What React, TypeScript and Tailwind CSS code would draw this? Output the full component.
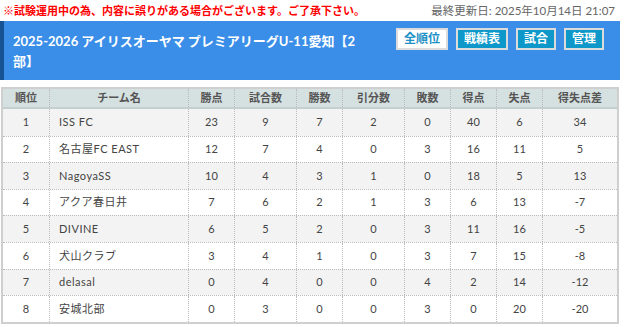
import React from "react";

const rows = [
  [1, "ISS FC", 23, 9, 7, 2, 0, 40, 6, "34"],
  [2, "名古屋FC EAST", 12, 7, 4, 0, 3, 16, 11, "5"],
  [3, "NagoyaSS", 10, 4, 3, 1, 0, 18, 5, "13"],
  [4, "アクア春日井", 7, 6, 2, 1, 3, 6, 13, "-7"],
  [5, "DIVINE", 6, 5, 2, 0, 3, 11, 16, "-5"],
  [6, "犬山クラブ", 3, 4, 1, 0, 3, 7, 15, "-8"],
  [7, "delasal", 0, 4, 0, 0, 4, 2, 14, "-12"],
  [8, "安城北部", 0, 3, 0, 0, 3, 0, 20, "-20"],
];

const headers = ["順位", "チーム名", "勝点", "試合数", "勝数", "引分数", "敗数", "得点", "失点", "得失点差"];
const widths = ["w-[46px]", "w-[139px]", "w-[46px]", "w-[62px]", "w-[46px]", "w-[62px]", "w-[46px]", "w-[46px]", "w-[46px]", "w-[77px]"];

export default function App() {
  return (
    <div
      className="w-[625px] h-[327px] bg-white overflow-hidden"
      style={{ fontFamily: 'Lato, "Noto Sans CJK JP", sans-serif' }}
    >
      <div className="w-[620px]">
        <div className="flex justify-between items-center h-[21px] px-[3px] leading-[21px]">
          <span className="text-[#ff0000] font-bold text-[11px]">※試験運用中の為、内容に誤りがある場合がございます。ご了承下さい。</span>
          <span className="text-[#666] text-[11.5px] pr-[2px]">最終更新日: 2025年10月14日 21:07</span>
        </div>
        <div className="h-[59px] bg-[#3a8ee8] border-l-[4px] border-[#175394] flex pl-[9px] pr-[16px]">
          <div className="w-[352px] text-white font-bold text-[13px] leading-[20px] pt-[10px]">
            2025-2026 アイリスオーヤマ プレミアリーグU-11愛知【2部】
          </div>
          <div className="flex gap-[8px] ml-auto pt-[7px] text-[12px] font-bold">
            <div className="h-[22px] w-[52px] bg-white border-[2px] border-[#dcdcdc] text-[#1b8fc6] flex items-center justify-center">全順位</div>
            <div className="h-[22px] w-[52px] bg-[#0d98c9] border-[2px] border-[#dcdcdc] text-white flex items-center justify-center">戦績表</div>
            <div className="h-[22px] w-[40px] bg-[#0d98c9] border-[2px] border-[#dcdcdc] text-white flex items-center justify-center">試合</div>
            <div className="h-[22px] w-[40px] bg-[#0d98c9] border-[2px] border-[#dcdcdc] text-white flex items-center justify-center">管理</div>
          </div>
        </div>
        <div className="mt-[7px] ml-[1px] w-[618px] border-[2px] border-[#cfcfcf] text-[11px] text-[#444]">
          <div className="flex h-[20px] bg-[#d5e0e0] border-b-[2px] border-[#c6cfcf] font-bold text-[#555]">
            {headers.map((h, i) => (
              <div
                key={i}
                className={`${widths[i]} ${i === 0 ? "" : "border-l border-dotted border-[#bbb]"} flex items-center justify-center shrink-0 ${i === 9 ? "flex-1" : ""}`}
              >
                {h}
              </div>
            ))}
          </div>
          {rows.map((r, ri) => (
            <div
              key={ri}
              className={`flex h-[26.6px] ${ri % 2 === 0 ? "bg-[#f3f3f3]" : "bg-white"} ${ri === 0 ? "" : "border-t border-dotted border-[#bbb]"}`}
            >
              {r.map((c, i) => (
                <div
                  key={i}
                  className={`${widths[i]} ${i === 0 ? "" : "border-l border-dotted border-[#bbb]"} flex items-center shrink-0 ${i === 1 ? "justify-start pl-[9px] tracking-[0.5px]" : "justify-center"} ${i === 9 ? "flex-1" : ""}`}
                >
                  {c}
                </div>
              ))}
            </div>
          ))}
        </div>
      </div>
    </div>
  );
}
